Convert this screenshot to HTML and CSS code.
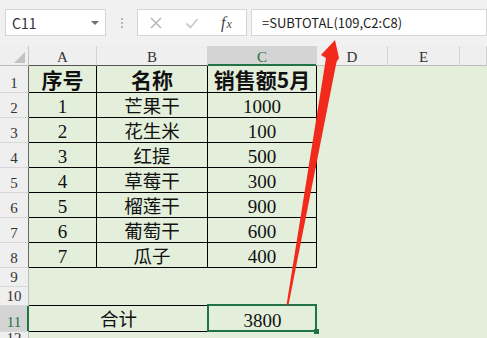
FILE: index.html
```html
<!DOCTYPE html>
<html lang="zh">
<head>
<meta charset="utf-8">
<title>SUBTOTAL</title>
<link rel="stylesheet" href="styles.css">
</head>
<body>
<div class="toolbar">
  <div class="namebox"><span>C11</span><span class="caret"></span></div>
  <div class="grip"><i></i><i></i><i></i></div>
  <div class="fxbox">
    <svg class="ic-x" width="14" height="14" viewBox="0 0 14 14"><path d="M2 2 L12 12 M12 2 L2 12" stroke="#b9b9b9" stroke-width="1.6" fill="none"/></svg>
    <svg class="ic-ok" width="14" height="14" viewBox="0 0 14 14"><path d="M1.5 7.5 L5.5 11.5 L12.5 3" stroke="#cacaca" stroke-width="1.8" fill="none"/></svg>
    <span class="fx"><span class="f">f</span><span class="x">x</span></span>
  </div>
  <div class="formula">=SUBTOTAL(109,C2:C8)</div>
</div>

<div class="sheet">
  <div class="corner"><span class="tri"></span></div>
  <div class="ch dk">A</div><div class="ch dk">B</div><div class="ch sel">C</div><div class="ch">D</div><div class="ch">E</div><div class="ch"></div>

  <div class="rh tb">1</div><div class="t hd">序号</div><div class="t hd">名称</div><div class="t hd">销售额5月</div><div></div><div></div><div></div>
  <div class="rh tb">2</div><div class="t num">1</div><div class="t zh">芒果干</div><div class="t num">1000</div><div></div><div></div><div></div>
  <div class="rh tb">3</div><div class="t num">2</div><div class="t zh">花生米</div><div class="t num">100</div><div></div><div></div><div></div>
  <div class="rh tb">4</div><div class="t num">3</div><div class="t zh">红提</div><div class="t num">500</div><div></div><div></div><div></div>
  <div class="rh tb">5</div><div class="t num">4</div><div class="t zh">草莓干</div><div class="t num">300</div><div></div><div></div><div></div>
  <div class="rh tb">6</div><div class="t num">5</div><div class="t zh">榴莲干</div><div class="t num">900</div><div></div><div></div><div></div>
  <div class="rh tb">7</div><div class="t num">6</div><div class="t zh">葡萄干</div><div class="t num">600</div><div></div><div></div><div></div>
  <div class="rh tb">8</div><div class="t num">7</div><div class="t zh">瓜子</div><div class="t num">400</div><div></div><div></div><div></div>

  <div class="rh">9</div><div></div><div></div><div></div><div></div><div></div><div></div>
  <div class="rh">10</div><div class="bb"></div><div class="bb"></div><div></div><div></div><div></div><div></div>
  <div class="rh sel">11</div><div class="m">合计</div><div class="cur">3800</div><div></div><div></div><div></div>
  <div class="rh">12</div><div></div><div></div><div></div><div></div><div></div><div></div>
</div>

<svg class="arrow" width="487" height="338" viewBox="0 0 487 338">
  <polygon points="286.5,305 326,58 321,55 335,40 339,58 336.5,62 288.5,305" fill="#f22a1c"/>
</svg>
</body>
</html>
```

FILE: styles.css
```css
* { box-sizing: border-box; margin: 0; padding: 0; }

html, body {
  width: 487px;
  height: 338px;
  overflow: hidden;
}

body {
  background: #f1f1f1;
  font-family: "Noto Sans CJK SC", sans-serif;
  position: relative;
}

/* ---------- formula toolbar ---------- */
.toolbar {
  height: 46px;
  display: flex;
  align-items: flex-start;
  padding-top: 9px;
  background: #f1f1f1;
}

.namebox {
  margin-left: 5px;
  width: 101px;
  height: 27px;
  background: #fff;
  border: 1px solid #d5d5d5;
  display: flex;
  align-items: center;
  justify-content: space-between;
  padding: 0 6px 0 6px;
  font-size: 14px;
  color: #333;
}

.caret {
  width: 0;
  height: 0;
  border-left: 4px solid transparent;
  border-right: 4px solid transparent;
  border-top: 4px solid #707070;
}

.grip {
  width: 31px;
  height: 27px;
  display: flex;
  flex-direction: column;
  align-items: center;
  justify-content: center;
  gap: 2px;
}

.grip i {
  display: block;
  width: 2px;
  height: 2px;
  background: #b5b5b5;
}

.fxbox {
  width: 110px;
  height: 27px;
  background: #fff;
  border: 1px solid #d5d5d5;
  display: flex;
  align-items: center;
}

.ic-x { margin-left: 11px; }
.ic-ok { margin-left: 22px; }

.fx {
  margin-left: 22px;
  font-family: "Liberation Serif", serif;
  font-style: italic;
  color: #444;
  display: flex;
  align-items: baseline;
}

.fx .f { font-size: 16px; }
.fx .x { font-size: 12px; margin-left: 1px; }

.formula {
  margin-left: 4px;
  flex: 1;
  height: 27px;
  background: #fff;
  border: 1px solid #d5d5d5;
  padding-left: 10px;
  font-size: 13px;
  color: #222;
  display: flex;
  align-items: center;
}

/* ---------- sheet grid ---------- */
.sheet {
  display: grid;
  grid-template-columns: 29px 68px 111px 109px 71px 72px 1fr;
  grid-template-rows: 20px 27px repeat(7, 25px) 19px 19px 26px 16px;
  background: #e3efdb;
}

.corner {
  background: #efefef;
  border-right: 1px solid #c4c4c4;
  border-bottom: 1px solid #bdbdbd;
  position: relative;
}

.corner .tri {
  position: absolute;
  right: 3px;
  bottom: 2px;
  width: 0;
  height: 0;
  border-left: 11px solid transparent;
  border-bottom: 11px solid #c2c2c2;
}

.ch {
  background: #efefef;
  border-right: 1px solid #d2d2d2;
  border-bottom: 1px solid #bdbdbd;
  font: 15px/15px "Liberation Serif", serif;
  color: #333;
  display: flex;
  justify-content: center;
  align-items: flex-end;
}

.ch.dk { border-bottom-color: #555; }

.ch.sel {
  background: #d4d4d4;
  color: #217346;
  border-bottom-color: #217346;
  box-shadow: inset 0 -1px 0 #217346;
}

.rh {
  background: #efefef;
  border-right: 1px solid #bdbdbd;
  border-bottom: 1px solid #d8d8d8;
  font: 15px/15px "Liberation Serif", serif;
  color: #333;
  display: flex;
  justify-content: center;
  align-items: flex-end;
  padding-bottom: 1px;
}

.rh.tb { border-right-color: #666; }

.rh.sel {
  background: #d4d4d4;
  color: #217346;
  border-right-color: #217346;
  box-shadow: inset -1px 0 0 #217346;
}

.t {
  border-right: 1px solid #000;
  border-bottom: 1px solid #000;
  display: flex;
  justify-content: center;
  align-items: flex-end;
  color: #111;
}

.num {
  font: 19px/19px "Liberation Serif", serif;
  padding-bottom: 1px;
}

.zh {
  font: 18.5px/18.5px "Noto Sans CJK SC", sans-serif;
  padding-bottom: 3px;
}

.hd {
  font: 700 21px/21px "Noto Sans CJK SC", sans-serif;
  padding-bottom: 2px;
}

.bb { border-bottom: 1px solid #000; }

.m {
  grid-column: span 2;
  border-bottom: 1px solid #000;
  display: flex;
  justify-content: center;
  align-items: flex-end;
  font: 18.5px/18.5px "Noto Sans CJK SC", sans-serif;
  color: #111;
  padding-bottom: 4px;
}

.cur {
  position: relative;
  display: flex;
  justify-content: center;
  align-items: flex-end;
  font: 19px/19px "Liberation Serif", serif;
  color: #111;
  padding-bottom: 2px;
}

.cur::after {
  content: "";
  position: absolute;
  left: -1px;
  top: -2px;
  right: 0;
  bottom: 0;
  border: 2px solid #217346;
}

.cur::before {
  content: "";
  position: absolute;
  right: -2px;
  bottom: -2px;
  width: 5px;
  height: 5px;
  background: #217346;
  z-index: 2;
}

.arrow {
  position: absolute;
  left: 0;
  top: 0;
  pointer-events: none;
  z-index: 5;
}
```
